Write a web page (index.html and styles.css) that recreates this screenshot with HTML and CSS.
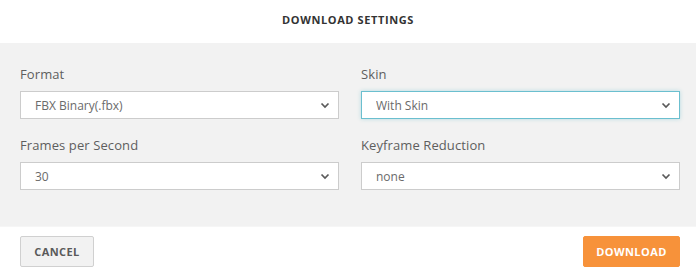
FILE: index.html
```html
<!DOCTYPE html>
<html lang="en">
<head>
    <meta charset="UTF-8">
    <meta name="viewport" content="width=device-width, initial-scale=1.0">
    <title>Download settings</title>
    <link rel="stylesheet" href="styles.css">
</head>
<body>
    <div class="dialog" role="dialog" aria-labelledby="dialogTitle">
        <div class="dialog-header">
            <h1 id="dialogTitle">Download settings</h1>
        </div>

        <form class="dialog-body" id="settingsForm">
            <div class="form-group">
                <label for="format">Format</label>
                <div class="select-wrap">
                    <select id="format" name="format">
                        <option>FBX Binary(.fbx)</option>
                        <option>FBX ASCII(.fbx)</option>
                        <option>Collada(.dae)</option>
                    </select>
                    <svg class="chevron" width="10" height="7" viewBox="0 0 10 7"><path d="M1.5 1.5 L5 5 L8.5 1.5" fill="none" stroke="#5a5a5a" stroke-width="1.7"/></svg>
                </div>
            </div>

            <div class="form-group">
                <label for="skin">Skin</label>
                <div class="select-wrap">
                    <select id="skin" name="skin" class="is-focused">
                        <option>With Skin</option>
                        <option>Without Skin</option>
                    </select>
                    <svg class="chevron" width="10" height="7" viewBox="0 0 10 7"><path d="M1.5 1.5 L5 5 L8.5 1.5" fill="none" stroke="#5a5a5a" stroke-width="1.7"/></svg>
                </div>
            </div>

            <div class="form-group">
                <label for="fps">Frames per Second</label>
                <div class="select-wrap">
                    <select id="fps" name="fps">
                        <option>30</option>
                        <option>24</option>
                        <option>60</option>
                    </select>
                    <svg class="chevron" width="10" height="7" viewBox="0 0 10 7"><path d="M1.5 1.5 L5 5 L8.5 1.5" fill="none" stroke="#5a5a5a" stroke-width="1.7"/></svg>
                </div>
            </div>

            <div class="form-group">
                <label for="reduction">Keyframe Reduction</label>
                <div class="select-wrap">
                    <select id="reduction" name="reduction">
                        <option>none</option>
                        <option>uniform</option>
                    </select>
                    <svg class="chevron" width="10" height="7" viewBox="0 0 10 7"><path d="M1.5 1.5 L5 5 L8.5 1.5" fill="none" stroke="#5a5a5a" stroke-width="1.7"/></svg>
                </div>
            </div>
        </form>

        <div class="dialog-footer">
            <button type="button" class="btn btn-cancel">Cancel</button>
            <button type="submit" form="settingsForm" class="btn btn-download">Download</button>
        </div>
    </div>
</body>
</html>
```

FILE: styles.css
```css
body {
    margin: 0;
    font-family: "Open Sans", "Liberation Sans", sans-serif;
    background-color: #fff;
    color: #555;
}
.dialog {
    width: 696px;
    height: 278px;
    display: flex;
    flex-direction: column;
}
.dialog-header {
    height: 43px;
    display: flex;
    align-items: center;
    justify-content: center;
    background-color: #fff;
}
.dialog-header h1 {
    margin: 0;
    font-size: 11px;
    font-weight: 700;
    letter-spacing: 0.6px;
    text-transform: uppercase;
    color: #333;
    position: relative;
    top: -2px;
}
.dialog-body {
    background-color: #f2f2f2;
    padding: 22px 16px 36px 20px;
    display: grid;
    grid-template-columns: 319px 319px;
    column-gap: 22px;
    row-gap: 17px;
}
.form-group label {
    display: block;
    font-size: 13px;
    line-height: 18px;
    margin-bottom: 8px;
    color: #5e5e5e;
    letter-spacing: 0.1px;
}
.select-wrap {
    position: relative;
}
select {
    appearance: none;
    -webkit-appearance: none;
    display: block;
    width: 100%;
    height: 28px;
    margin: 0;
    padding: 0 30px 0 14px;
    border: 1px solid #ccc;
    border-radius: 0;
    background-color: #fff;
    font-family: inherit;
    font-size: 12px;
    color: #6a6a6a;
    box-sizing: border-box;
    outline: none;
}
select.is-focused,
select:focus {
    border-color: #6bbfcf;
    box-shadow: 0 0 4px rgba(107, 191, 207, 0.45);
}
.chevron {
    position: absolute;
    right: 9px;
    top: 11px;
    pointer-events: none;
}
.dialog-footer {
    flex: 1;
    background-color: #fff;
    border-top: 1px solid #f6f6f6;
    display: flex;
    justify-content: space-between;
    align-items: flex-start;
    padding: 9px 16px 0 20px;
}
.btn {
    height: 31px;
    border-radius: 2px;
    font-family: inherit;
    font-size: 11px;
    font-weight: 700;
    text-transform: uppercase;
    letter-spacing: 0.4px;
    cursor: pointer;
}
.btn-cancel {
    width: 74px;
    background-color: #f2f2f2;
    border: 1px solid #d0d0d0;
    color: #5a5a5a;
}
.btn-download {
    width: 97px;
    background-color: #f7923a;
    border: 1px solid #f7923a;
    color: #fff;
}
.btn-download:hover {
    background-color: #ee8428;
}
```
